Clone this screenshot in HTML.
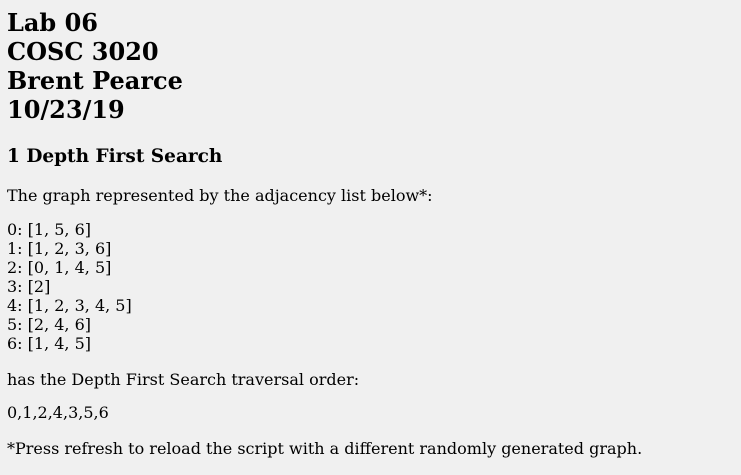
<!DOCTYPE html>
<html><head><meta charset="utf-8"><style>
html,body{margin:0;padding:0;background:#f0f0f0;}
body{width:741px;height:475px;overflow:hidden;font-family:"DejaVu Serif","Liberation Serif",serif;color:#000;padding:8px 0 0 7px;box-sizing:border-box;}
h1{font-size:24px;line-height:29px;margin:0;font-weight:bold;}
h3{font-size:18.5px;line-height:21px;margin:21.5px 0 0;font-weight:bold;}
p{font-size:16px;line-height:19px;margin:0;}
</style></head><body>
<h1>Lab 06<br>COSC 3020<br>Brent Pearce<br>10/23/19</h1>
<h3>1 Depth First Search</h3>
<p style="margin-top:19.5px">The graph represented by the adjacency list below*:</p>
<p style="margin-top:15px">0: [1, 5, 6]<br>1: [1, 2, 3, 6]<br>2: [0, 1, 4, 5]<br>3: [2]<br>4: [1, 2, 3, 4, 5]<br>5: [2, 4, 6]<br>6: [1, 4, 5]</p>
<p style="margin-top:17px">has the Depth First Search traversal order:</p>
<p style="margin-top:14px">0,1,2,4,3,5,6</p>
<p style="margin-top:17px">*Press refresh to reload the script with a different randomly generated graph.</p>
</body></html>
